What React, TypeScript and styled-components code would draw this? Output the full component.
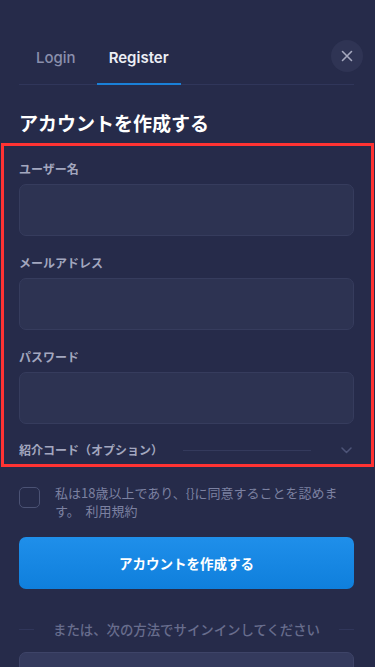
import styled, { createGlobalStyle } from 'styled-components';

const colors = {
  bg: '#262b4a',
  field: '#2d3352',
  fieldBorder: '#363c5d',
  label: '#a3a7bf',
  muted: '#7c81a1',
  faint: '#686d8d',
  line: '#30365a',
  blue: '#1a80d8',
};

const GlobalStyle = createGlobalStyle`
  html, body {
    margin: 0;
    padding: 0;
    background: ${colors.bg};
  }
  body {
    font-family: Inter, "Noto Sans CJK JP", sans-serif;
    -webkit-font-smoothing: antialiased;
  }
  * { box-sizing: border-box; }
`;

function CloseIcon() {
  return (
    <svg width="12" height="12" viewBox="0 0 12 12" fill="none">
      <path d="M1.5 1.5l9 9M10.5 1.5l-9 9" stroke="#a6a9bf" strokeWidth="1.6" strokeLinecap="round" />
    </svg>
  );
}

function Chevron() {
  return (
    <svg width="11" height="7" viewBox="0 0 11 7" fill="none">
      <path d="M1 1l4.5 4.5L10 1" stroke="#4d5478" strokeWidth="1.5" strokeLinecap="round" strokeLinejoin="round" />
    </svg>
  );
}

const fields = ['ユーザー名', 'メールアドレス', 'パスワード'];
const agreement = '私は18歳以上であり、{}に同意することを認めます。\u00a0 利用規約';

export default function App() {
  return (
    <>
      <GlobalStyle />
      <Page>
        <Header>
          <Tabs>
            <Tab>Login</Tab>
            <Tab $active>Register</Tab>
          </Tabs>
          <CloseButton title="Close">
            <CloseIcon />
          </CloseButton>
        </Header>

        <Heading>アカウントを作成する</Heading>

        <Highlight>
          {fields.map((f) => (
            <Field key={f}>
              <Label>{f}</Label>
              <Input />
            </Field>
          ))}
          <Referral>
            <Label as="span">紹介コード（オプション）</Label>
            <RefLine />
            <Chevron />
          </Referral>
        </Highlight>

        <Agree>
          <Checkbox />
          <AgreeText>{agreement}</AgreeText>
        </Agree>

        <Submit>アカウントを作成する</Submit>

        <OrRow>
          <OrLine />
          <OrText>または、次の方法でサインインしてください</OrText>
          <OrLine />
        </OrRow>

        <SocialBox />
      </Page>
    </>
  );
}

const Page = styled.div`
  height: 667px;
  overflow: hidden;
  padding: 40px 21px 0 19px;
  display: flex;
  flex-direction: column;

  & > * {
    flex-shrink: 0;
  }
`;

const Header = styled.div`
  position: relative;
  border-bottom: 1px solid ${colors.line};
`;

const Tabs = styled.div`
  display: flex;
  gap: 9px;
  padding-left: 5px;
  padding-top: 8px;
`;

const Tab = styled.div<{ $active?: boolean }>`
  padding: 0 12px 15px;
  font-size: 15px;
  line-height: 20px;
  font-weight: ${(p) => (p.$active ? 600 : 500)};
  color: ${(p) => (p.$active ? '#eceef5' : '#8a8fac')};
  border-bottom: 2px solid ${(p) => (p.$active ? colors.blue : 'transparent')};
  margin-bottom: -1px;
`;

const CloseButton = styled.button`
  position: absolute;
  right: -9px;
  top: 0;
  width: 32px;
  height: 32px;
  border-radius: 50%;
  border: none;
  background: #2f3454;
  display: flex;
  align-items: center;
  justify-content: center;
  padding: 0;
`;

const Heading = styled.h1`
  margin: 26px 0 0;
  font-family: "Noto Sans CJK JP", sans-serif;
  font-size: 19px;
  line-height: 24px;
  font-weight: 700;
  color: #ffffff;
`;

const Highlight = styled.div`
  margin: 8px -20px 0 -18px;
  border: 3px solid #ff3333;
  padding: 15px 17px 6px 15px;
  display: flex;
  flex-direction: column;
  gap: 19px;
`;

const Field = styled.div`
  display: flex;
  flex-direction: column;
  gap: 7px;
`;

const Label = styled.label`
  font-family: "Noto Sans CJK JP", sans-serif;
  font-size: 12px;
  line-height: 16px;
  font-weight: 700;
  color: ${colors.label};
`;

const Input = styled.input`
  height: 52px;
  width: 100%;
  background: ${colors.field};
  border: 1px solid ${colors.fieldBorder};
  border-radius: 7px;
  outline: none;
`;

const Referral = styled.div`
  display: flex;
  align-items: center;
  padding-right: 2px;
  margin-top: -1px;
`;

const RefLine = styled.div`
  flex: 1;
  height: 1px;
  background: #343a5c;
  margin: 0 30px 0 20px;
`;

const Agree = styled.div`
  display: flex;
  align-items: flex-start;
  gap: 15px;
  margin-top: 17px;
`;

const Checkbox = styled.div`
  flex: none;
  width: 21px;
  height: 21px;
  margin-top: 3px;
  border: 1.5px solid #4b5274;
  border-radius: 5px;
`;

const AgreeText = styled.p`
  margin: 0;
  font-family: "Noto Sans CJK JP", sans-serif;
  font-size: 13px;
  line-height: 18px;
  color: ${colors.muted};
`;

const Submit = styled.button`
  margin-top: 17px;
  height: 52px;
  width: 100%;
  border: none;
  border-radius: 7px;
  background: linear-gradient(180deg, #1f8fea 0%, #0f7fdc 100%);
  color: #ffffff;
  font-family: "Noto Sans CJK JP", sans-serif;
  font-size: 13.5px;
  font-weight: 700;
`;

const OrRow = styled.div`
  margin-top: 30px;
  display: flex;
  align-items: center;
  gap: 19px;
`;

const OrLine = styled.div`
  flex: 1;
  height: 1px;
  background: #30365a;
`;

const OrText = styled.span`
  font-family: "Noto Sans CJK JP", sans-serif;
  font-size: 13.4px;
  line-height: 20px;
  font-weight: 500;
  color: ${colors.faint};
`;

const SocialBox = styled.div`
  margin-top: 13px;
  height: 52px;
  background: #343a5d;
  border: 1px solid #3e4468;
  border-radius: 7px;
`;
